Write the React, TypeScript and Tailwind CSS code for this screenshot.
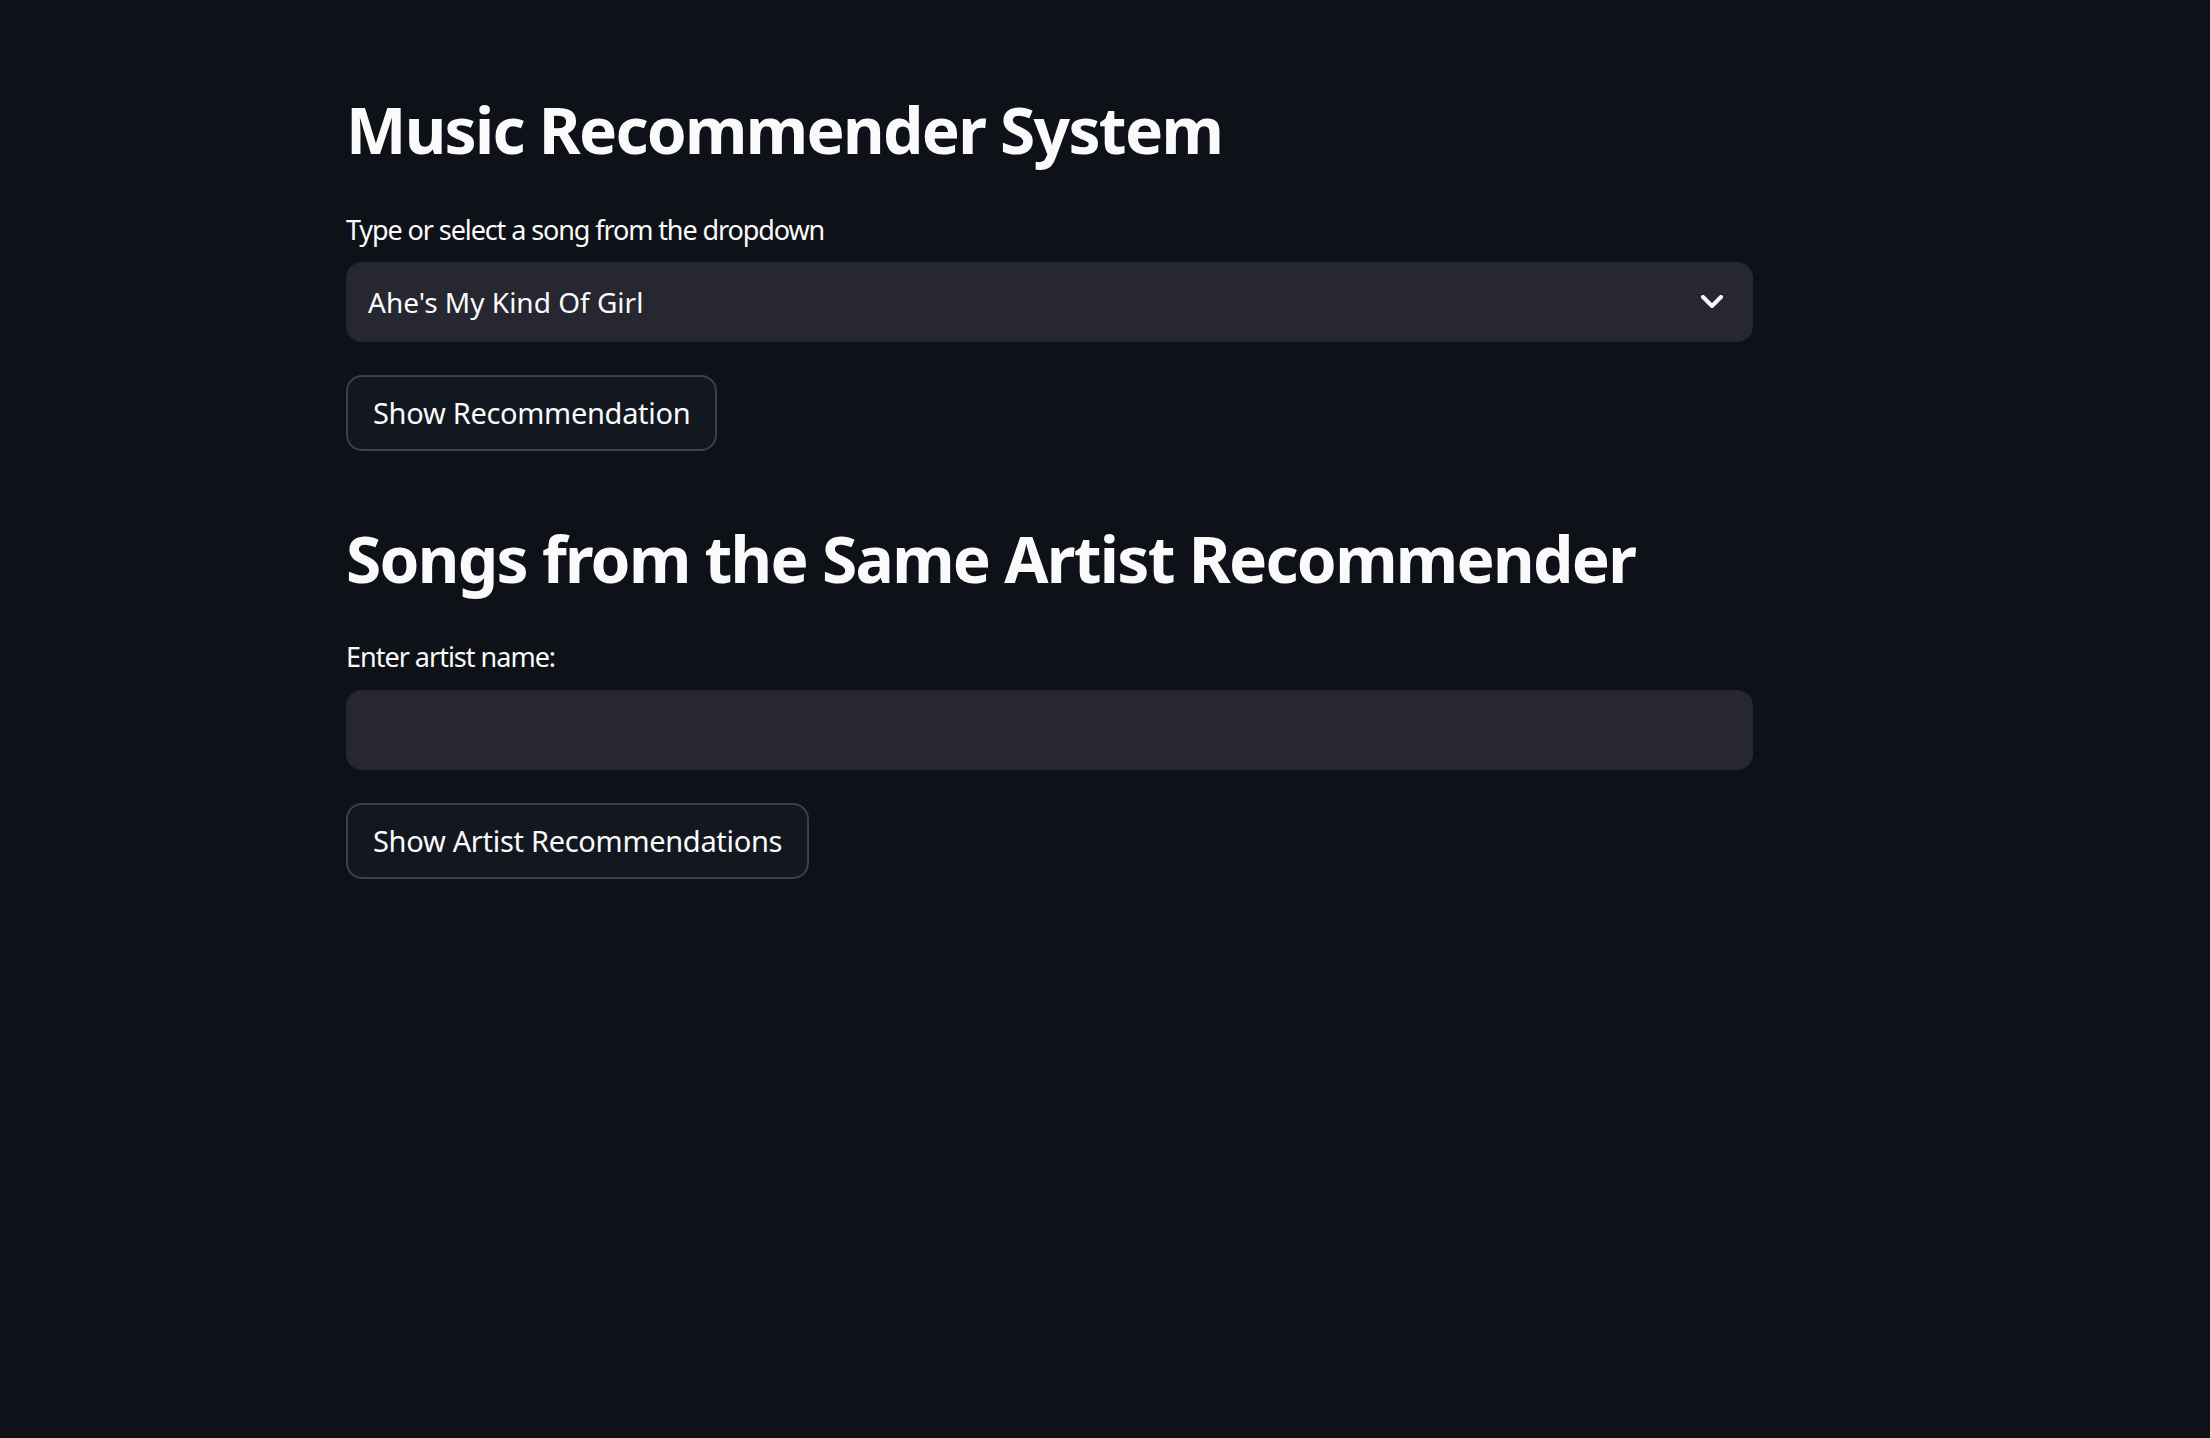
import React from "react";

function Chevron() {
  return (
    <svg width="22" height="14" viewBox="0 0 22 14" fill="none" className="shrink-0">
      <polyline points="2,2 11,11 20,2" stroke="#fafafa" strokeWidth="4" strokeLinecap="round" strokeLinejoin="round" />
    </svg>
  );
}

export default function App() {
  const font = { fontFamily: '"Noto Sans", "Open Sans", sans-serif' };
  return (
    <div className="min-h-screen w-full bg-[#0e1117] text-[#fafafa]" style={font}>
      <div className="ml-[346px] w-[1407px] pt-[98px] flex flex-col">
        <h1 className="text-[64px] leading-[64px] font-bold tracking-[-1.7px]">Music Recommender System</h1>
        <label className="mt-[54px] text-[27px] leading-[28px] tracking-[-1.1px]">Type or select a song from the dropdown</label>
        <div className="mt-[18px] h-[80px] rounded-[16px] bg-[#262730] flex items-center justify-between pl-[22px] pr-[30px]">
          <span className="text-[28px]">Ahe's My Kind Of Girl</span>
          <Chevron />
        </div>
        <div className="mt-[33px]">
          <button className="h-[76px] rounded-[16px] border-2 border-[#3d4047] bg-[#131720] px-[25px] text-[29px] tracking-[-0.3px] text-[#fafafa]">
            Show Recommendation
          </button>
        </div>
        <h2 className="mt-[76px] text-[64px] leading-[64px] font-bold tracking-[-1.7px]">Songs from the Same Artist Recommender</h2>
        <label className="mt-[52px] text-[27px] leading-[28px] tracking-[-1px]">Enter artist name:</label>
        <div className="mt-[19px] h-[80px] rounded-[16px] bg-[#262730]" />
        <div className="mt-[33px]">
          <button className="h-[76px] rounded-[16px] border-2 border-[#3d4047] bg-[#131720] px-[25px] text-[29px] tracking-[-0.3px] text-[#fafafa]">
            Show Artist Recommendations
          </button>
        </div>
      </div>
    </div>
  );
}
